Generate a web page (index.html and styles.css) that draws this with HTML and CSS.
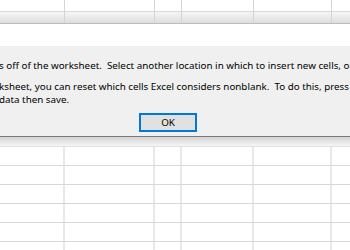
FILE: index.html
```html
<!DOCTYPE html>
<html lang="en">
<head>
    <meta charset="UTF-8">
    <title>Microsoft Excel</title>
    <link rel="stylesheet" href="styles.css">
</head>
<body>
    <div class="sheet-top">
        <div class="cols row-top">
            <div></div><div></div><div></div><div></div><div></div><div></div>
        </div>
        <div class="cols band">
            <div></div><div></div><div></div><div></div><div></div><div></div>
        </div>
    </div>
    <div class="gap"></div>

    <div class="dialog">
        <div class="message">
            <p class="line">s off of the worksheet.  Select another location in which to insert new cells, or</p>
            <p class="line para">ksheet, you can reset which cells Excel considers nonblank.  To do this, press C</p>
            <p class="line">data then save.</p>
        </div>
        <div class="buttons">
            <button class="ok-btn">OK</button>
        </div>
    </div>
    <div class="shadow"></div>

    <div class="grid">
        <div class="cols row"><div></div><div></div><div></div><div></div><div></div><div></div></div>
        <div class="cols row"><div></div><div></div><div></div><div></div><div></div><div></div></div>
        <div class="cols row"><div></div><div></div><div></div><div></div><div></div><div></div></div>
        <div class="cols row"><div></div><div></div><div></div><div></div><div></div><div></div></div>
        <div class="cols row"><div></div><div></div><div></div><div></div><div></div><div></div></div>
        <div class="cols row"><div></div><div></div><div></div><div></div><div></div><div></div></div>
    </div>
</body>
</html>
```

FILE: styles.css
```css
body {
    margin: 0;
    width: 350px;
    height: 250px;
    overflow: hidden;
    background-color: #fff;
    font-family: "Noto Sans", "Liberation Sans", sans-serif;
}
.cols {
    display: grid;
    grid-template-columns: 65px 90px 27px 72px 78px 1fr;
}
.cols div {
    border-right: 1px solid #d4d4d4;
}
.cols div:last-child {
    border-right: none;
}
.row-top {
    height: 11px;
    border-bottom: 1px solid #d8d8d8;
}
.band {
    height: 11px;
    background: linear-gradient(#f6f6f6, #dedede);
    border-bottom: 1px solid #bdbdbd;
}
.gap {
    height: 22px;
}
.dialog {
    height: 90px;
    background-color: #f0f0f0;
    box-sizing: border-box;
    padding-top: 13px;
}
.message {
    margin-left: -1px;
    font-size: 9.8px;
    color: #000;
}
.line {
    margin: 0;
    height: 13px;
    line-height: 13px;
    white-space: pre;
}
.para {
    margin-top: 8px;
}
.buttons {
    display: flex;
    padding-left: 139px;
    margin-top: 7px;
}
.ok-btn {
    width: 58px;
    height: 19px;
    padding: 0;
    background-color: #e1e1e1;
    border: 2px solid #0078d7;
    font-family: inherit;
    font-size: 9.8px;
    color: #000;
}
.shadow {
    height: 11px;
    border-top: 1px solid #7a7a7a;
    background: linear-gradient(#d4d4d4, #f6f6f6);
    border-bottom: 1px solid #e0e0e0;
    box-sizing: border-box;
}
.grid .cols div {
    border-right: 2px solid #e8e8e8;
}
.grid .cols div:last-child {
    border-right: none;
}
.row {
    height: 18px;
    border-bottom: 1px solid #d8d8d8;
}
```
